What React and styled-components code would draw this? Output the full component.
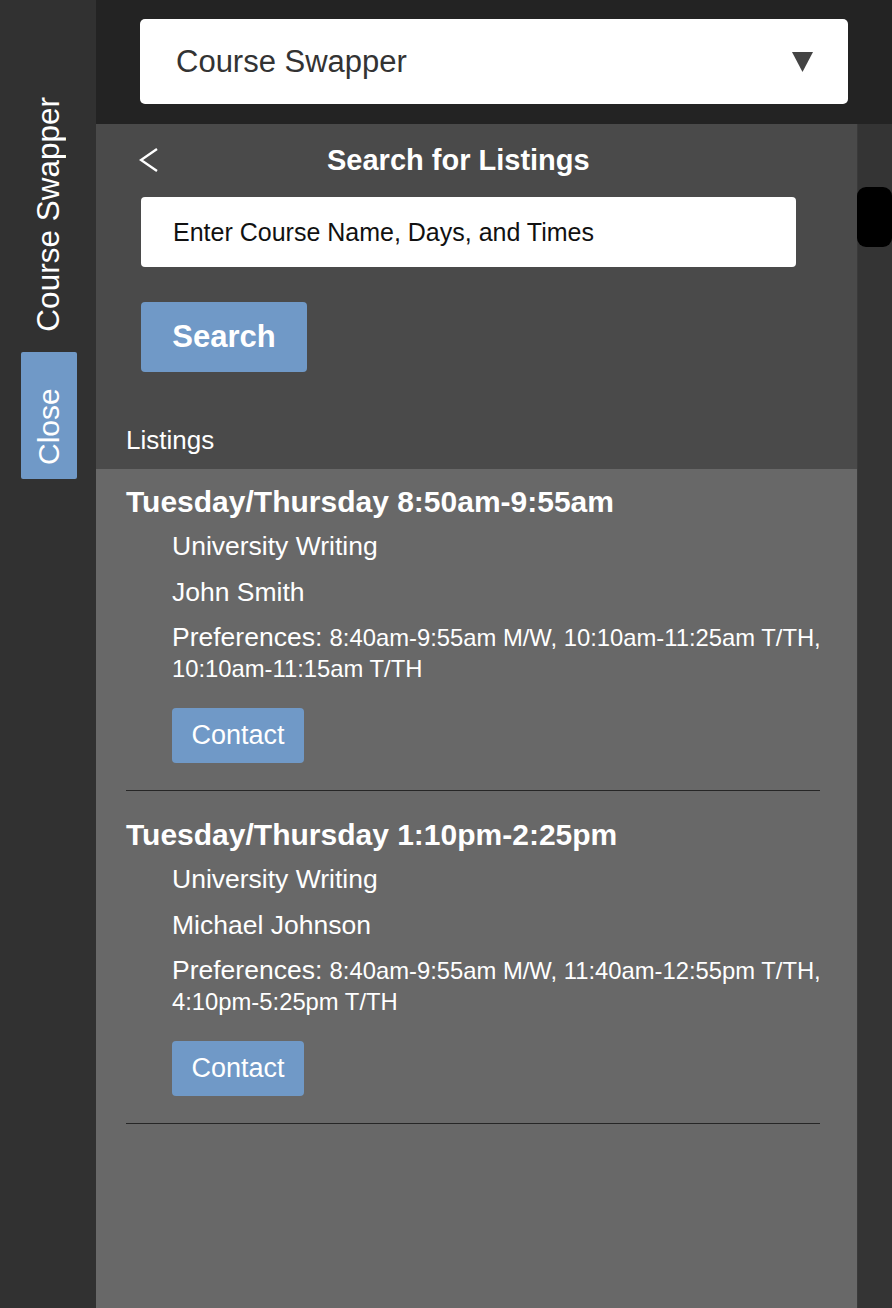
import React from "react";
import styled, { createGlobalStyle } from "styled-components";

const GlobalStyle = createGlobalStyle`
  html, body {
    margin: 0;
    padding: 0;
    background: #2f2f2f;
  }
  * {
    box-sizing: border-box;
  }
  body {
    font-family: "Liberation Sans", Arial, Helvetica, sans-serif;
  }
`;

const listings = [
  {
    id: 1,
    time: "Tuesday/Thursday 8:50am-9:55am",
    course: "University Writing",
    name: "John Smith",
    prefs: "8:40am-9:55am M/W, 10:10am-11:25am T/TH, 10:10am-11:15am T/TH",
  },
  {
    id: 2,
    time: "Tuesday/Thursday 1:10pm-2:25pm",
    course: "University Writing",
    name: "Michael Johnson",
    prefs: "8:40am-9:55am M/W, 11:40am-12:55pm T/TH, 4:10pm-5:25pm T/TH",
  },
];

function App() {
  return (
    <>
      <GlobalStyle />
      <Screen>
        <Sidebar>
          <VerticalLabel>Course Swapper</VerticalLabel>
          <CloseTab>Close</CloseTab>
        </Sidebar>
        <Main>
          <TopBar>
            <Dropdown>
              <span>Course Swapper</span>
              <svg width="21" height="20" viewBox="0 0 21 20">
                <polygon points="0,0 21,0 10.5,20" fill="#444" />
              </svg>
            </Dropdown>
          </TopBar>
          <Body>
            <Content>
              <SearchPanel>
                <Header>
                  <BackButton>
                    <svg width="20" height="26" viewBox="0 0 20 26">
                      <polyline
                        points="18,2 2,13 18,24"
                        fill="none"
                        stroke="#fff"
                        strokeWidth="2.4"
                      />
                    </svg>
                  </BackButton>
                  <Title>Search for Listings</Title>
                </Header>
                <SearchInput placeholder="Enter Course Name, Days, and Times" />
                <SearchButton>Search</SearchButton>
                <SectionLabel>Listings</SectionLabel>
              </SearchPanel>
              <ListingsPanel>
                {listings.map((item) => (
                  <Listing key={item.id}>
                    <ListingTitle>{item.time}</ListingTitle>
                    <Details>
                      <Line>{item.course}</Line>
                      <Line>{item.name}</Line>
                      <Prefs>
                        Preferences: <small>{item.prefs}</small>
                      </Prefs>
                      <ContactButton>Contact</ContactButton>
                    </Details>
                    <Divider />
                  </Listing>
                ))}
              </ListingsPanel>
            </Content>
            <ScrollTrack>
              <ScrollThumb />
            </ScrollTrack>
          </Body>
        </Main>
      </Screen>
    </>
  );
}

const Screen = styled.div`
  display: flex;
  width: 892px;
  height: 1308px;
  overflow: hidden;
`;

const Sidebar = styled.aside`
  width: 96px;
  flex-shrink: 0;
  background: #313131;
  display: flex;
  flex-direction: column;
  align-items: center;
  padding-top: 97px;
`;

const VerticalLabel = styled.div`
  writing-mode: vertical-rl;
  transform: rotate(180deg);
  color: #fff;
  font-size: 31.5px;
  line-height: 34px;
`;

/* rotated 180deg, so padding-bottom pushes the text visually down */
const CloseTab = styled.button`
  margin-top: 20px;
  margin-left: 2px;
  width: 56px;
  height: 127px;
  border: none;
  border-radius: 2px;
  background: #7099c7;
  color: #fff;
  font-family: inherit;
  font-size: 30px;
  padding: 0 0 22px 0;
  display: flex;
  align-items: center;
  justify-content: center;
  writing-mode: vertical-rl;
  transform: rotate(180deg);
`;

const Main = styled.div`
  flex: 1;
  display: flex;
  flex-direction: column;
  min-width: 0;
`;

const TopBar = styled.header`
  height: 124px;
  background: #232323;
  padding: 19px 44px 20px 44px;
`;

const Dropdown = styled.div`
  height: 85px;
  background: #fff;
  border-radius: 5px;
  display: flex;
  align-items: center;
  justify-content: space-between;
  padding: 0 35px 0 36px;
  color: #333;
  font-size: 31px;
`;

const Body = styled.div`
  flex: 1;
  display: flex;
`;

const Content = styled.div`
  flex: 1;
  display: flex;
  flex-direction: column;
`;

const SearchPanel = styled.section`
  background: #4a4a4a;
  padding: 12px 0 14px 45px;
  display: flex;
  flex-direction: column;
  align-items: flex-start;
`;

const Header = styled.div`
  height: 48px;
  display: flex;
  align-items: center;
  color: #fff;
`;

const BackButton = styled.div`
  width: 20px;
  display: flex;
  align-items: center;
  margin-left: -2px;
`;

const Title = styled.h1`
  margin: 0 0 0 168px;
  font-size: 29px;
  font-weight: 700;
  line-height: 34px;
`;

const SearchInput = styled.input`
  margin-top: 13px;
  width: 655px;
  height: 70px;
  border: none;
  border-radius: 4px;
  padding: 0 32px;
  font-family: inherit;
  font-size: 25px;
  outline: none;
  &::placeholder {
    color: #111;
  }
`;

const BlueButton = styled.button`
  border: none;
  background: #7099c7;
  color: #fff;
  font-family: inherit;
  border-radius: 4px;
  padding: 0;
  cursor: pointer;
`;

const SearchButton = styled(BlueButton)`
  margin-top: 35px;
  width: 166px;
  height: 70px;
  font-size: 31px;
  font-weight: 700;
`;

const SectionLabel = styled.div`
  margin: 53px 0 0 -15px;
  color: #fff;
  font-size: 26px;
  line-height: 30px;
`;

const ListingsPanel = styled.section`
  flex: 1;
  background: #686868;
  padding: 16px 26px 0 30px;
`;

const Listing = styled.article`
  color: #fff;
  & + & {
    margin-top: 27px;
  }
`;

const ListingTitle = styled.h2`
  margin: 0;
  font-size: 30px;
  font-weight: 700;
  line-height: 34px;
`;

const Details = styled.div`
  padding-left: 46px;
  display: flex;
  flex-direction: column;
  align-items: flex-start;
`;

const Line = styled.p`
  margin: 0;
  font-size: 26.5px;
  line-height: 32px;
  &:first-child {
    margin-top: 11px;
  }
  & + & {
    margin-top: 14px;
  }
`;

const Prefs = styled.p`
  margin: 14px 0 0;
  font-size: 26.5px;
  line-height: 30px;
  small {
    font-size: 23.8px;
  }
`;

const ContactButton = styled(BlueButton)`
  margin-top: 24px;
  width: 132px;
  height: 55px;
  font-size: 27px;
`;

const Divider = styled.hr`
  margin: 27px 11px 0 0;
  border: none;
  border-top: 1.5px solid #262626;
`;

const ScrollTrack = styled.div`
  width: 35px;
  flex-shrink: 0;
  background: #343434;
  border-left: 1px solid #3a3a3a;
  padding-top: 63px;
`;

const ScrollThumb = styled.div`
  height: 60px;
  margin-left: -1px;
  background: #000;
  border-radius: 9px;
`;

export default App;
